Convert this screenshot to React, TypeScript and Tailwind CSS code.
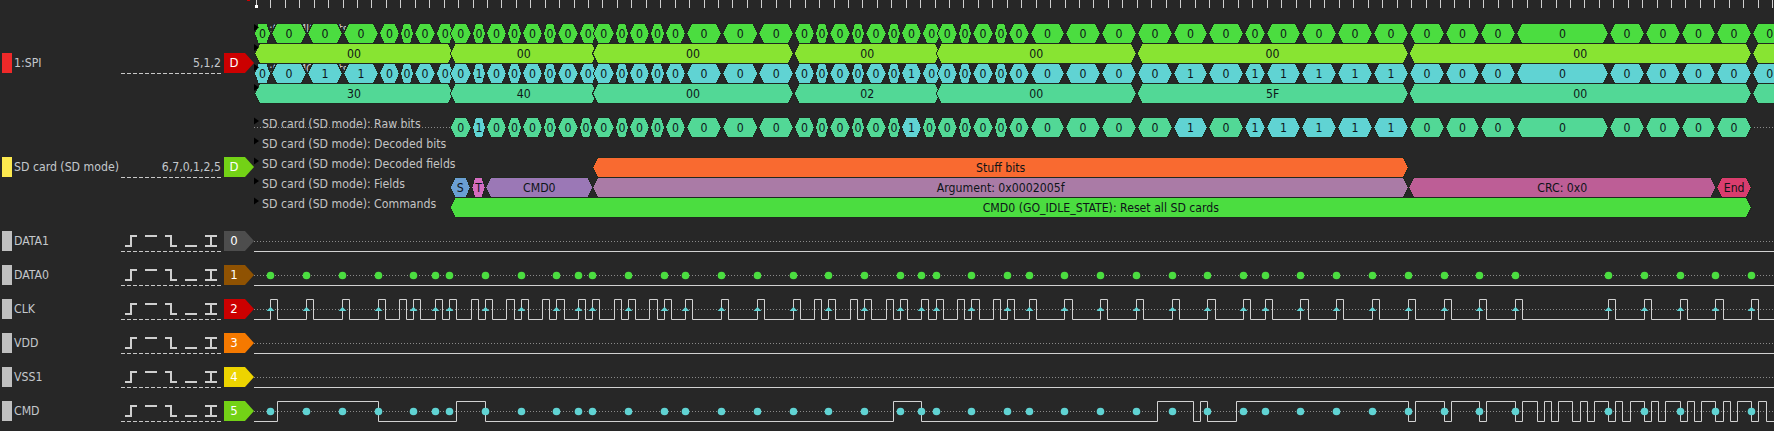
const rising = [
  270.3, 306.3, 342.3, 378.3, 399.3, 413.3, 435.3, 449.3, 471.3, 485.3, 506.3, 521.3, 542.3, 556.3,
  578.3, 592.3, 614.3, 628.3, 649.3, 664.3, 685.3, 721.3, 757.7, 793.3, 814.3, 828.3, 850.3, 864.3,
  886.3, 900.3, 921.3, 936.3, 957.3, 971.3, 993.3, 1007.3, 1029.3, 1064.3, 1100.3, 1136.3, 1172.3,
  1207.3, 1243.3, 1265.3, 1300.3, 1336.3, 1372.3, 1408.3, 1444.3, 1479.3, 1515.3, 1608.3, 1644.3,
  1680.3, 1715.3, 1751.3,
]
const widePulse = [506.3, 556.3, 649.3, 971.3, 1064.3, 1207.3, 1300.3, 1715.3]
const markers = [
  270.3, 306.3, 342.3, 378.3, 413.3, 435.3, 449.3, 485.3, 521.3, 556.3, 578.3, 592.3, 628.3, 664.3,
  685.3, 721.3, 757.7, 793.3, 828.3, 864.3, 900.3, 921.3, 936.3, 971.3, 1007.3, 1029.3, 1064.3,
  1100.3, 1136.3, 1172.3, 1207.3, 1243.3, 1265.3, 1300.3, 1336.3, 1372.3, 1408.3, 1444.3, 1479.3,
  1515.3, 1608.3, 1644.3, 1680.3, 1715.3, 1751.3,
]
const cmdToggles = [
  277.3, 378.3, 456.3, 485.3, 893.3, 921.3, 1157.3, 1193.3, 1200.3, 1207.3, 1236.3, 1408.3, 1415.3,
  1444.3, 1451.3, 1479.3, 1486.3, 1515.3, 1522.3, 1537.3, 1544.3, 1551.3, 1558.3, 1572.3, 1580.3,
  1587.3, 1594.3, 1608.3, 1615.3, 1622.3, 1630.3, 1644.3, 1651.3, 1658.3, 1665.3, 1680.3, 1687.3,
  1694.3, 1701.3, 1715.3, 1723.3, 1730.3, 1737.3, 1751.3, 1758.3, 1766.3,
]

// bytes on the MOSI line, 0x30 first. Bits are cut at the clock edges
const mosiBytes = [0x30, 0x40, 0x00, 0x02, 0x00, 0x5f, 0x00]
const mosiBits = mosiBytes.flatMap((b) => Array.from({ length: 8 }, (_, i) => (b >> (7 - i)) & 1))
// the last bit of these bytes runs a bit long and is overlapped by the next one
const overlapEdges = [449.3, 592.3, 936.3]

const GREEN = '#4bdd40'
const LIME = '#88e432'
const CYAN = '#60d3d3'
const MINT = '#52d896'

type Seg = [number, number, string]

const bitEdges = [255, ...rising, 1787]
const bitSegs = (vals: string[]): Seg[] =>
  vals.map((v, i) => {
    const a = bitEdges[i]
    const b = bitEdges[i + 1]
    const start = i === 0 ? 255 : a + (overlapEdges.includes(a) ? 1.4 : 1.7)
    const end = overlapEdges.includes(b) ? b + 4 : b - 0.3
    return [start, end, v]
  })

const misoBits = bitSegs(Array.from({ length: 57 }, () => '0'))
const mosiVals = bitSegs([...mosiBits.map(String), '0'])
const rawBits = mosiVals.slice(8, 56).map(([s, e, v], i): Seg => {
  const edge = bitEdges[i + 9]
  return [s, overlapEdges.includes(edge) ? edge - 0.3 : e, v]
})

const byteSpans: [number, number][] = [
  [255, 453], [450.7, 597], [593, 793], [794.5, 940], [936.7, 1136], [1137.5, 1407.7], [1409.7, 1751], [1753, 1790],
]
const byteSegs = (vals: string[]): Seg[] => byteSpans.map(([s, e], i) => [s, e, vals[i]])

function Hex({ seg, y, fill }: { seg: Seg; y: number; fill: string }) {
  const [s, e, label] = seg
  const cap = Math.min(5, (e - s) / 4)
  const top = y - 10
  const bot = y + 10
  const l = s - 0.5
  const r = e + 0.5
  return (
    <g>
      <polygon
        points={`${l},${y} ${l + cap},${top} ${r - cap},${top} ${r},${y} ${r - cap},${bot} ${l + cap},${bot}`}
        fill={fill}
        stroke="#202820"
        shapeRendering="crispEdges"
      />
      {label && (
        <text x={(s + e) / 2} y={y + 4.5} textAnchor="middle" fill="#0d1418">
          {label}
        </text>
      )}
    </g>
  )
}

const px = (x: number) => Math.floor(x) + 0.5

function clkPath(low: number) {
  const high = low - 20
  let d = `M254 ${low}`
  rising.forEach((x) => {
    const f = x + (widePulse.includes(x) ? 8 : 7)
    d += ` H${px(x)} V${high} H${px(f)} V${low}`
  })
  return d + ' H1774'
}

function cmdPath(low: number) {
  const high = low - 20
  let level = false
  let d = `M254 ${low}`
  cmdToggles.forEach((x) => {
    level = !level
    d += ` H${px(x)} V${level ? high : low}`
  })
  return d + ' H1774'
}

function Waveforms() {
  const lows = [251.5, 285.5, 319.5, 353.5, 387.5, 421.5]
  return (
    <svg width={1520} height={431} viewBox="254 0 1520 431" className="shrink-0">
      {/* ruler */}
      {Array.from({ length: 106 }, (_, i) => {
        const x = Math.round(255.9 + i * 14.44) + 0.5
        return <line key={i} x1={x} x2={x} y1={0} y2={8} stroke="#d0d0d0" />
      })}
      <rect x={255} y={5} width={3} height={3} fill="#ffffff" />

      {/* decoder row titles, the annotations lie on top of them */}
      <g fill="#c4c4c4">
        <text x={262} y={33}>1:SPI: MISO bits</text>
        <text x={262} y={73}>1:SPI: MOSI bits</text>
        <text x={262} y={127.5}>SD card (SD mode): Raw bits</text>
        <text x={262} y={147.5}>SD card (SD mode): Decoded bits</text>
        <text x={262} y={167.5}>SD card (SD mode): Decoded fields</text>
        <text x={262} y={187.5}>SD card (SD mode): Fields</text>
        <text x={262} y={207.5}>SD card (SD mode): Commands</text>
      </g>
      <line x1={254} x2={1774} y1={127.5} y2={127.5} stroke="#8a8a8a" strokeDasharray="1 2" />

      {misoBits.map((s, i) => <Hex key={i} seg={s} y={33.5} fill={GREEN} />)}
      {byteSegs(['00', '00', '00', '00', '00', '00', '00', '']).map((s, i) => <Hex key={i} seg={s} y={53.5} fill={LIME} />)}
      {mosiVals.map((s, i) => <Hex key={i} seg={s} y={73.5} fill={CYAN} />)}
      {byteSegs(['30', '40', '00', '02', '00', '5F', '00', '']).map((s, i) => <Hex key={i} seg={s} y={93.5} fill={MINT} />)}

      {rawBits.map((s, i) => <Hex key={i} seg={s} y={127.5} fill={s[2] === '1' ? CYAN : MINT} />)}

      <Hex seg={[593.3, 1408, 'Stuff bits']} y={167.5} fill="#f96a30" />
      <Hex seg={[450.7, 470, 'S']} y={187.5} fill="#6a9fd3" />
      <Hex seg={[472.3, 484.7, 'T']} y={187.5} fill="#d46cc0" />
      <Hex seg={[486.3, 592.3, 'CMD0']} y={187.5} fill="#9b78b6" />
      <Hex seg={[593.3, 1408, 'Argument: 0x0002005f']} y={187.5} fill="#aa7ba6" />
      <Hex seg={[1409.3, 1715.3, 'CRC: 0x0']} y={187.5} fill="#bd5e96" />
      <Hex seg={[1717.3, 1751, 'End']} y={187.5} fill="#d93d6e" />
      <Hex seg={[450.7, 1751, 'CMD0 (GO_IDLE_STATE): Reset all SD cards']} y={207.5} fill={GREEN} />

      {[24, 44, 64, 84, 117.5, 137.5, 157.5, 177.5, 197.5].map((t) => (
        <polygon key={t} points={`254,${t} 259,${t + 3.5} 254,${t + 7}`} fill="#000000" />
      ))}

      {/* logic channels */}
      {lows.map((low) => (
        <line key={low} x1={254} x2={1774} y1={low - 10} y2={low - 10} stroke="#8a8a8a" strokeDasharray="1 2" />
      ))}
      <g fill="none" stroke="#d2d2d2">
        <path d="M254 251.5 H1774" />
        <path d="M254 285.5 H1774" />
        <path d={clkPath(319.5)} />
        <path d="M254 353.5 H1774" />
        <path d="M254 387.5 H1774" />
        <path d={cmdPath(421.5)} />
      </g>
      {markers.map((x) => (
        <g key={x}>
          <circle cx={px(x)} cy={275.5} r={3.8} fill={GREEN} />
          <polygon points={`${px(x) - 4},311 ${px(x) + 4},311 ${px(x)},307`} fill={CYAN} />
          <circle cx={px(x)} cy={411.5} r={3.8} fill={CYAN} />
        </g>
      ))}
    </svg>
  )
}

function TriggerIcons() {
  return (
    <svg width={100} height={20} className="block" fill="none" stroke="#cfcfcf" strokeWidth={2} shapeRendering="crispEdges">
      <path d="M4 15 H10 V5 H16" />
      <path d="M24 5 H36" />
      <path d="M44 5 H50 V15 H56" />
      <path d="M64 15 H76" />
      <path d="M84 5 H96 M84 15 H96 M90 5 V15" />
    </svg>
  )
}

function Tag({ text, color }: { text: string; color: string }) {
  return (
    <div
      className={`ml-[3px] flex h-5 w-[30px] items-center justify-center pr-[10px] text-[13px] text-white [clip-path:polygon(0_0,21px_0,30px_50%,21px_100%,0_100%)] ${color}`}
    >
      {text}
    </div>
  )
}

function Row({ swatch, label, tag, tagColor, value, className }: {
  swatch: string
  label: string
  tag: string
  tagColor: string
  value?: string
  className: string
}) {
  return (
    <div className={`flex h-5 items-stretch pl-[2px] ${className}`}>
      <div className={`w-[10px] shrink-0 ${swatch}`} />
      <div className="min-w-0 flex-1 whitespace-nowrap pl-[2px] leading-5">{label}</div>
      <div className="relative h-[21px] w-[100px] shrink-0">
        {value ? <div className="text-right leading-5">{value}</div> : <TriggerIcons />}
        <div className="absolute bottom-0 left-0 right-0 h-px bg-[repeating-linear-gradient(90deg,#c8c8c8_0,#c8c8c8_4px,transparent_4px,transparent_6px)]" />
      </div>
      <Tag text={tag} color={tagColor} />
    </div>
  )
}

const channels = [
  { label: 'DATA1', tag: '0', color: 'bg-[#4d4d4d]' },
  { label: 'DATA0', tag: '1', color: 'bg-[#8f5202]' },
  { label: 'CLK', tag: '2', color: 'bg-[#cc0000]' },
  { label: 'VDD', tag: '3', color: 'bg-[#f57900]' },
  { label: 'VSS1', tag: '4', color: 'bg-[#edd400]' },
  { label: 'CMD', tag: '5', color: 'bg-[#73d216]' },
]

export default function App() {
  return (
    <div className="relative flex h-[431px] w-[1774px] overflow-hidden bg-[#272727] font-['DejaVu_Sans_Condensed','DejaVu_Sans',sans-serif] text-[12.2px] text-[#c4c8cc]">
      {/* stray bit of the cursor flag above the ruler */}
      <div className="absolute left-[247px] top-0 h-px w-[3px] bg-[#cc0000]" />
      <div className="w-[254px] shrink-0 pt-[53px]">
        <Row swatch="bg-[#ef2929]" label="1:SPI" value="5,1,2" tag="D" tagColor="bg-[#cc0000]" className="" />
        <Row swatch="bg-[#fce94f]" label="SD card (SD mode)" value="6,7,0,1,2,5" tag="D" tagColor="bg-[#73d216]" className="mt-[84px]" />
        <div className="mt-[54px] flex flex-col gap-[14px]">
          {channels.map((c) => (
            <Row key={c.label} swatch="bg-[#bfbfbf]" label={c.label} tag={c.tag} tagColor={c.color} className="" />
          ))}
        </div>
      </div>
      <Waveforms />
    </div>
  )
}
